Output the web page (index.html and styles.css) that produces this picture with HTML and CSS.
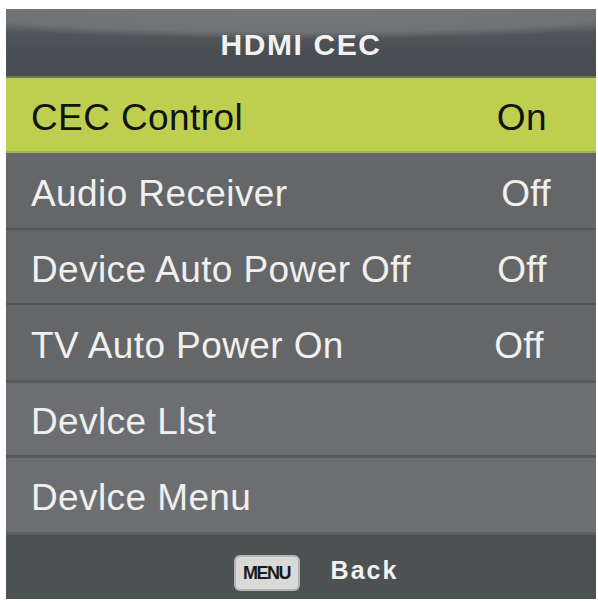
FILE: index.html
```html
<!DOCTYPE html>
<html lang="en">
<head>
<meta charset="utf-8">
<title>HDMI CEC</title>
<link rel="stylesheet" href="styles.css">
</head>
<body>
<div class="panel">
  <div class="header">HDMI CEC</div>
  <div class="row selected"><span class="label">CEC Control</span><span class="value v1">On</span></div>
  <div class="row"><span class="label">Audio Receiver</span><span class="value v2">Off</span></div>
  <div class="row"><span class="label">Device Auto Power Off</span><span class="value v3">Off</span></div>
  <div class="row"><span class="label">TV Auto Power On</span><span class="value v4">Off</span></div>
  <div class="row light"><span class="label">Devlce Llst</span></div>
  <div class="row light"><span class="label">Devlce Menu</span></div>
  <div class="footer"><span class="key">MENU</span><span class="back">Back</span></div>
</div>
</body>
</html>
```
FILE: styles.css
```css
html, body {
  margin: 0;
  padding: 0;
  background: #ffffff;
}
body {
  padding: 9px 2px 5px 6px;
  font-family: "Liberation Sans", Arial, sans-serif;
}
.panel {
  width: 590px;
  height: 590px;
  display: grid;
  grid-template-rows: 69px 75px 75px 75px 77px 75px 77px 67px;
  background: #5f6162;
}
.header {
  display: flex;
  align-items: center;
  justify-content: center;
  padding-top: 4px;
  color: #f2f2f2;
  font-weight: bold;
  font-size: 30px;
  letter-spacing: 1.6px;
  background:
    radial-gradient(ellipse 80% 55% at 50% -10%, #777a7c 0%, #707375 80%, rgba(112,115,117,0) 100%),
    linear-gradient(#5c6063, #4a4f53 60%, #474c50);
  border-bottom: 2px solid #6f7a55;
}
.row {
  display: flex;
  align-items: center;
  justify-content: space-between;
  padding: 6px 0 0 25px;
  font-size: 37px;
  letter-spacing: 0.4px;
  color: #f0f0f0;
  background: #646667;
  border-top: 2px solid #535556;
}
.row.selected {
  background: #becf50;
  color: #121212;
  border-top: none;
  border-bottom: 2px solid #a7b153;
}
.row.selected + .row {
  border-top: none;
}
.row.light {
  background: #6d6e71;
  border-top: 3px solid #58595b;
}
.v1 { margin-right: 49px; }
.v2 { margin-right: 45px; }
.v3 { margin-right: 49px; }
.v4 { margin-right: 52px; }
.footer {
  display: flex;
  align-items: center;
  justify-content: center;
  gap: 31px;
  padding: 12px 0 0 30px;
  background: #4c5154;
  border-top: 3px solid #5b5f61;
}
.key {
  display: inline-flex;
  align-items: center;
  justify-content: center;
  box-sizing: border-box;
  width: 66px;
  height: 36px;
  background: #d9d9d9;
  border: 2px solid #b5b5b5;
  border-radius: 6px;
  color: #1a1a1a;
  font-weight: bold;
  font-size: 18px;
  letter-spacing: -1.5px;
}
.back {
  color: #f2f2f2;
  font-weight: bold;
  font-size: 25px;
  letter-spacing: 2px;
  margin-top: -6px;
}
```
